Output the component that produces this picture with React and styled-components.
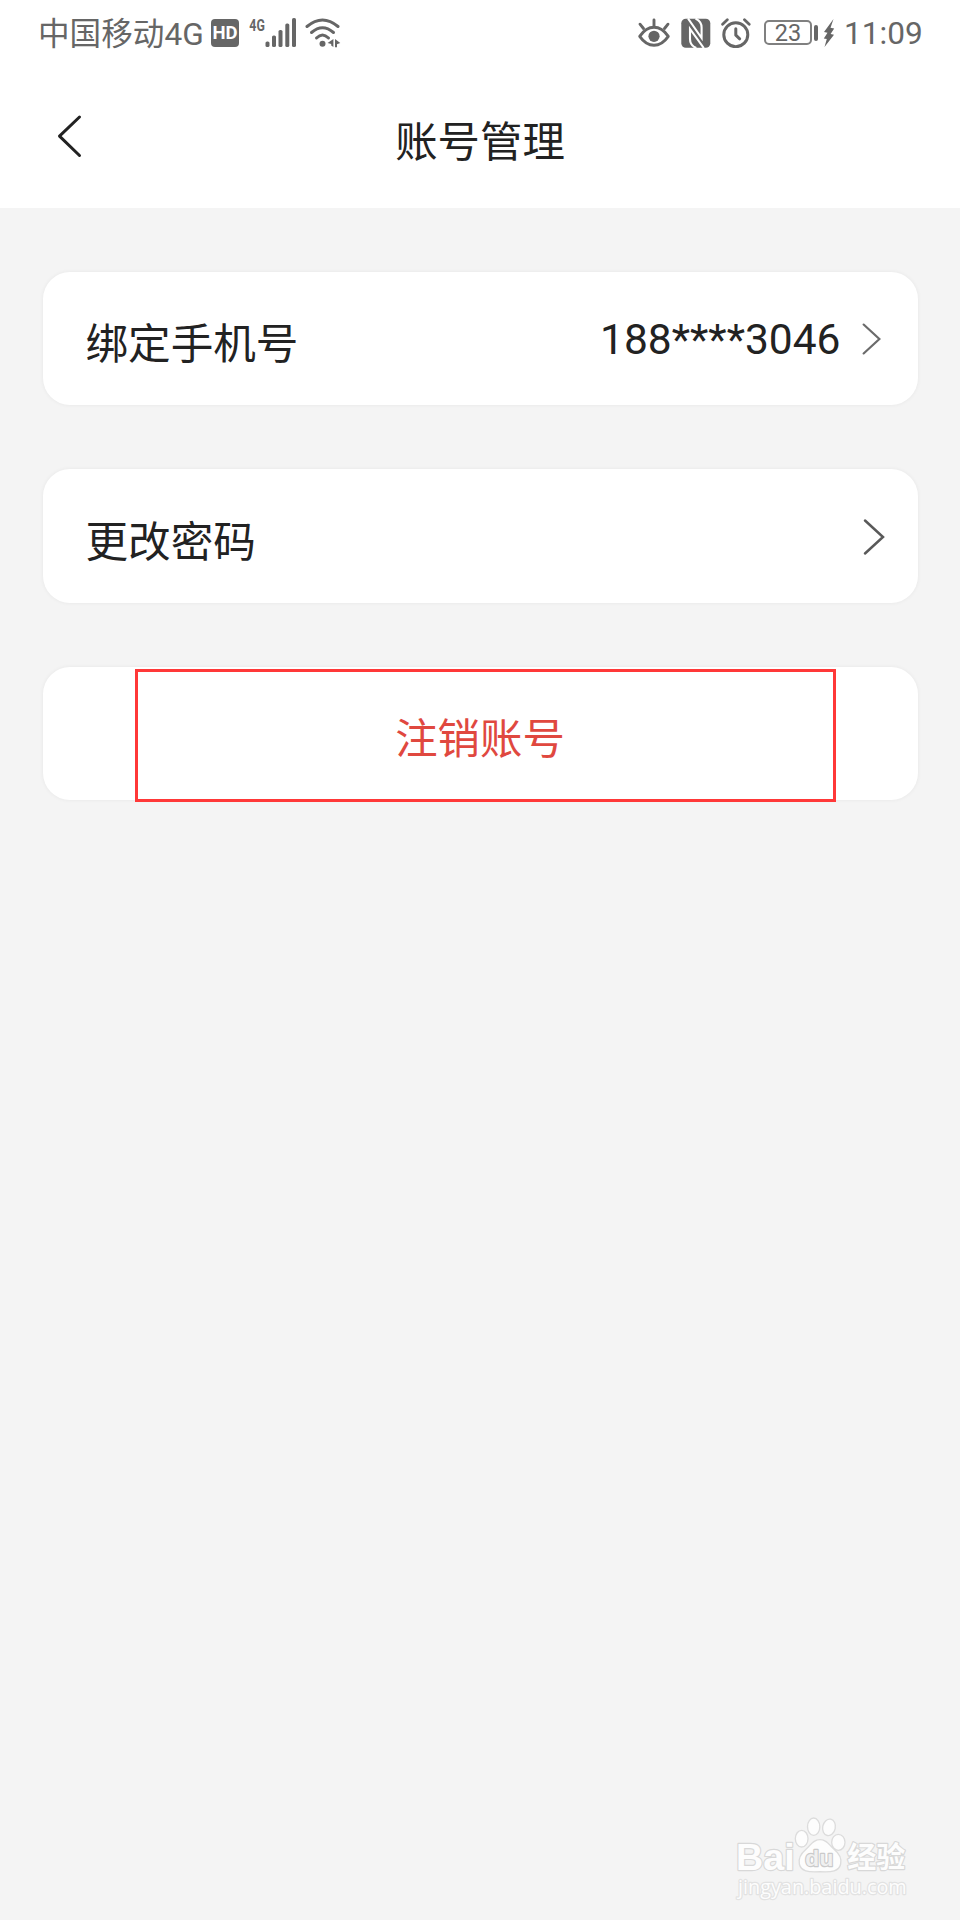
import React from 'react'
import styled, { createGlobalStyle } from 'styled-components'

const rows = [
  { id: 'phone', label: '绑定手机号', value: '188****3046' },
  { id: 'password', label: '更改密码' },
]

const StatusBar = () => (
  <StatusContainer>
    <StatusGroup>
      <Carrier>中国移动4G</Carrier>
      <HdBadge>HD</HdBadge>
      <Signal />
      <Wifi />
    </StatusGroup>

    <StatusGroup>
      <Eye />
      <Nfc />
      <Alarm />
      <Battery>23</Battery>
      <BatteryTip />
      <Bolt />
      <Time>11:09</Time>
    </StatusGroup>
  </StatusContainer>
)

const Signal = () => (
  <Icon width="48" height="30" viewBox="0 0 48 30" fill="#666" $left={10}>
    <NetworkText x="0.3" y="12.7" textLength="15.5" lengthAdjust="spacingAndGlyphs">
      4G
    </NetworkText>
    <rect x="16.5" y="23.5" width="4" height="5.5" rx="1.6" />
    <rect x="23" y="17.5" width="4" height="11.5" rx="1.6" />
    <rect x="29.5" y="12" width="4" height="17" rx="1.6" />
    <rect x="36.3" y="5.5" width="4" height="23.5" rx="1.6" />
    <rect x="43" y="0" width="4" height="29" rx="1.6" />
  </Icon>
)

const Wifi = () => (
  <Icon width="36" height="30" viewBox="0 0 36 30" $left={8}>
    <g fill="none" stroke="#666" strokeWidth="3" strokeLinecap="round">
      <path d="M2 8.5 Q17.5 -4.5 33 8.5" />
      <path d="M6.5 14.5 Q17.5 5 28.5 14.5" />
      <path d="M11.5 20 Q17.5 14 23.5 20" />
    </g>
    <g fill="#666">
      <circle cx="17.5" cy="25.7" r="3" />
      <path d="M22.6 25 L28.4 21 V29 L26.2 27.4 V26 Z" />
      <path d="M30 21 L35.3 25 L32 26.2 V29.2 H30 Z" />
    </g>
  </Icon>
)

const Eye = () => (
  <Icon width="34" height="30" viewBox="0 0 34 30">
    <g fill="none" stroke="#666" strokeWidth="2.9" strokeLinecap="round" strokeLinejoin="round">
      <path d="M2.7 18.3 Q9 9.3 17 9.3 T31.3 18.3 Q25 27.3 17 27.3 T2.7 18.3 Z" />
      <path d="M17 2 V8 M3 6.2 L6.5 10.5 M31 6.2 L27.5 10.5" />
    </g>
    <circle cx="17" cy="18.3" r="5.6" fill="#666" />
  </Icon>
)

const Nfc = () => (
  <Icon width="30" height="30" viewBox="0 0 30 30" $left={10}>
    <rect x="0.3" y="0.8" width="29" height="29" rx="4.5" fill="#666" />
    <g fill="none" stroke="#fff" strokeWidth="2.1">
      <path d="M7 0.5 L20.6 20 V9.5 Q20.6 3.5 14.5 0.6" />
      <path d="M22.8 30 L9 11 V21 Q9 27.5 15.3 30" />
    </g>
  </Icon>
)

const Alarm = () => (
  <Icon width="30" height="30" viewBox="0 0 30 30" $left={10}>
    <g fill="none" stroke="#666" strokeLinecap="round" strokeLinejoin="round">
      <circle cx="14.8" cy="16.7" r="12" strokeWidth="3" />
      <path d="M14.8 10.8 V17.2 L18.7 20.8" strokeWidth="3" />
      <path d="M1.6 6.2 L6.3 1.8 M28.2 6.2 L23.5 1.8" strokeWidth="2.8" />
    </g>
  </Icon>
)

const Bolt = () => (
  <Icon width="12" height="30" viewBox="0 0 12 30" $left={5}>
    <path d="M10.5 1 L1 14 L4.5 14.8 L0.8 20.5 L3.8 21 L1.5 29 L11 16.8 L7.6 16 L11.2 10.5 L7.5 9.8 Z" fill="#666" />
  </Icon>
)

const Watermark = () => (
  <WatermarkSvg width="220" height="110" viewBox="0 0 660 330">
    <g fill="#fdfdfd" stroke="#dcdcdc" strokeWidth="4">
      <ellipse cx="245" cy="116" rx="19" ry="25" />
      <ellipse cx="281" cy="80" rx="18.5" ry="26" />
      <ellipse cx="327" cy="82" rx="19" ry="25" transform="rotate(12 327 82)" />
      <ellipse cx="355" cy="127" rx="20" ry="24" />
      <path d="M300 119 C322 119 328 136 342 148 C358 161 366 174 362 192 C357 214 336 217 300 215 C264 217 243 214 238 192 C234 174 243 161 258 148 C272 136 278 119 300 119 Z" />
    </g>
    <g fill="#fdfdfd" stroke="#d8d8d8" strokeWidth="7" paintOrder="stroke" strokeLinejoin="round">
      <BrandText x="48" y="211" fontSize="113" textLength="176">Bai</BrandText>
      <BrandText x="256" y="198" fontSize="68" textLength="84" fill="#f0f0f0" stroke="#cacaca">du</BrandText>
      <BrandText x="382" y="204" fontSize="87" textLength="174">经验</BrandText>
      <UrlText x="54" y="281" fontSize="58" textLength="506" lengthAdjust="spacingAndGlyphs" stroke="#e2e2e2">
        jingyan.baidu.com
      </UrlText>
    </g>
  </WatermarkSvg>
)

const App = () => {
  return (
    <Page>
      <GlobalStyle />
      <Header>
        <StatusBar />
        <TitleBar>
          <BackButton aria-label="返回">
            <svg width="28" height="46" viewBox="0 0 28 46">
              <path d="M24.5 4 L4.5 23.2 L24.5 42.5" fill="none" stroke="#222" strokeWidth="3" strokeLinecap="round" strokeLinejoin="round" />
            </svg>
          </BackButton>
          <Title>账号管理</Title>
        </TitleBar>
      </Header>

      <Content>
        {rows.map(({ id, label, value }) => (
          <Card key={id}>
            <Label>{label}</Label>
            {value && <Value>{value}</Value>}
            <Chevron width="24" height="38" viewBox="0 0 24 38" $small={Boolean(value)}>
              <path d="M3 2.5 L21 19 L3 35.5" />
            </Chevron>
          </Card>
        ))}
        <Card $center>
          <CancelLabel>注销账号</CancelLabel>
          <Highlight />
        </Card>
      </Content>

      <Watermark />
    </Page>
  )
}

export default App

const GlobalStyle = createGlobalStyle`
  * {
    box-sizing: border-box;
  }

  body {
    margin: 0;
    background: #f4f4f4;
  }
`

const Page = styled.div`
  position: relative;
  width: 960px;
  height: 1920px;
  background: #f4f4f4;
  color: #222;
  font-family: Roboto, 'Noto Sans CJK SC', sans-serif;
  overflow: hidden;
`

const Header = styled.header`
  height: 208px;
  background: #fff;
`

const StatusContainer = styled.div`
  display: flex;
  justify-content: space-between;
  height: 66px;
  padding: 0 38px 0 38px;
  color: #666;
`

const StatusGroup = styled.div`
  display: flex;
  align-items: center;
  height: 65px;
`

const Carrier = styled.span`
  width: 173px;
  padding-top: 4px;
  font-size: 31.6px;
  line-height: 40px;
  white-space: nowrap;
`

const HdBadge = styled.span`
  width: 28px;
  height: 28px;
  border-radius: 4px;
  background: #666;
  color: #fff;
  font-size: 18.5px;
  font-weight: 700;
  line-height: 28px;
  text-align: center;
`

const NetworkText = styled.text`
  font-family: Roboto, sans-serif;
  font-size: 17px;
  font-weight: 700;
`

const Icon = styled.svg`
  display: block;
  flex: none;
  margin-left: ${({ $left = 0 }) => $left}px;
`

const Battery = styled.span`
  width: 48px;
  height: 25px;
  margin-left: 13px;
  border: 2px solid #808080;
  border-radius: 5px;
  font-size: 23.5px;
  line-height: 23px;
  text-align: center;
`

const BatteryTip = styled.span`
  width: 4px;
  height: 16px;
  margin-left: 2px;
  border-radius: 2px;
  background: #666;
`

const Time = styled.span`
  width: 79px;
  margin-left: 9px;
  margin-right: -1px;
  padding-top: 3px;
  font-size: 31.6px;
  line-height: 40px;
`

const TitleBar = styled.div`
  display: flex;
  align-items: flex-start;
  justify-content: space-between;
  padding: 47px 54px 0 55px;

  &::after {
    content: '';
    width: 29px;
  }
`

const BackButton = styled.button`
  display: block;
  width: 28px;
  height: 46px;
  padding: 0;
  border: 0;
  background: none;

  svg {
    display: block;
  }
`

const Title = styled.h1`
  margin: 2px 0 0;
  font-size: 42.4px;
  font-weight: 400;
  line-height: 56px;
`

const Content = styled.main`
  display: flex;
  flex-direction: column;
  gap: 64px;
  padding: 64px 42.5px 0 42.5px;
`

const Card = styled.section`
  position: relative;
  display: flex;
  align-items: center;
  justify-content: ${({ $center }) => ($center ? 'center' : 'flex-start')};
  height: 133.4px;
  padding: 0 ${({ $center }) => ($center ? 0 : 32)}px 0 ${({ $center }) => ($center ? 0 : 43)}px;
  border-radius: 27px;
  background: #fff;
  box-shadow: 0 0 4px rgba(0, 0, 0, 0.06);
`

const Label = styled.span`
  flex: 1;
  padding-top: 11px;
  font-size: 42.6px;
  line-height: 60px;
`

const Value = styled.span`
  margin-right: 20px;
  padding-top: 2px;
  font-size: 42.5px;
  line-height: 60px;
`

const Chevron = styled.svg`
  width: ${({ $small }) => ($small ? 21 : 24)}px;
  height: ${({ $small }) => ($small ? 34 : 38)}px;
  margin-top: ${({ $small }) => ($small ? 0 : 2)}px;
  margin-right: ${({ $small }) => ($small ? 4 : 0)}px;
  fill: none;
  stroke: ${({ $small }) => ($small ? '#6b6b6b' : '#595959')};
  stroke-width: 2.5;
  stroke-linecap: round;
`

const CancelLabel = styled.span`
  padding-top: 13px;
  color: #e0483f;
  font-size: 42.4px;
  line-height: 60px;
`

const Highlight = styled.div`
  position: absolute;
  top: 2px;
  left: 92.5px;
  width: 701px;
  height: 133px;
  border: 3px solid #ff3838;
`

const WatermarkSvg = styled.svg`
  position: absolute;
  right: 20px;
  bottom: 10px;
`

const BrandText = styled.text`
  font-family: 'Liberation Sans', 'Noto Sans CJK SC', sans-serif;
  font-weight: 700;
`

const UrlText = styled.text`
  font-family: 'Open Sans', 'Noto Sans', sans-serif;
`
